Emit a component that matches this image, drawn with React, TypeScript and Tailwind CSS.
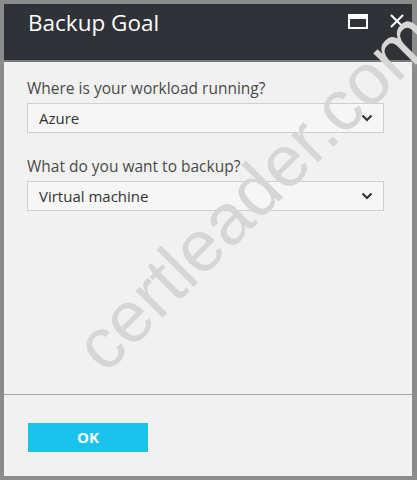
import React from "react";

const Chevron = () => (
  <svg width="12" height="8" viewBox="0 0 12 8" className="shrink-0">
    <path d="M1.5 1.5 L6 6 L10.5 1.5" fill="none" stroke="#333" strokeWidth="2.2" />
  </svg>
);

const Dropdown = ({ label, value }: { label: string; value: string }) => (
  <div className="flex flex-col">
    <div className="text-[15.5px] leading-[20px] text-[#4a4a4a]">{label}</div>
    <div className="mt-[5px] h-[30px] w-[357px] border border-[#cfcfcf] bg-[#f6f6f6] flex items-center justify-between pl-[11px] pr-[10px]">
      <span className="text-[15px] text-[#333]">{value}</span>
      <Chevron />
    </div>
  </div>
);

export default function App() {
  return (
    <div
      className="relative w-[417px] h-[480px] bg-[#8c8c8c] pt-[4px] pl-[4px] pr-[5px] pb-[4px] overflow-hidden"
      style={{ fontFamily: '"Open Sans", "Noto Sans", sans-serif' }}
    >
      <div className="flex flex-col h-full bg-[#f1f1f1]">
        <div className="h-[58px] bg-[#2f3236] flex items-start justify-between pl-[24px] pr-[7px] pt-[3px] border-b-2 border-[#7a7a7a]">
          <span className="text-[22.5px] leading-[32px] text-white">Backup Goal</span>
          <div className="flex items-center gap-[21px] pt-[6px]">
            <div className="w-[20px] h-[15px] border-2 border-t-[5px] border-white bg-[#2f3236]" />
            <svg width="16" height="16" viewBox="0 0 16 16">
              <path d="M2 2 L14 14 M14 2 L2 14" stroke="white" strokeWidth="2" />
            </svg>
          </div>
        </div>
        <div className="flex flex-col gap-[23px] pl-[23px] pt-[16px] h-[332px]">
          <Dropdown label="Where is your workload running?" value="Azure" />
          <Dropdown label="What do you want to backup?" value="Virtual machine" />
        </div>
        <div className="border-t border-[#a5a5a5] pt-[28px] pl-[24px]">
          <button className="w-[120px] h-[29px] bg-[#1bc3ec] text-white font-bold text-[15px]">OK</button>
        </div>
      </div>
      {/* watermark */}
      <div
        className="absolute left-[62px] top-[332px] origin-top-left -rotate-45 text-[72px] text-[#d6d6d6] pointer-events-none whitespace-nowrap leading-none"
        style={{ fontFamily: '"Liberation Sans", sans-serif' }}
      >
        certleader.com
      </div>
    </div>
  );
}
